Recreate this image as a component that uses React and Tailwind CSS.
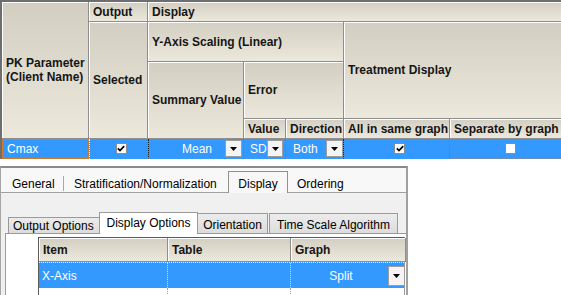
import React from 'react';

const font = "font-['Liberation_Sans',Arial,sans-serif]";
const head =
  'bg-gradient-to-b from-[#d2cec2] to-[#ece9dc] border-r border-b border-r-[#8e8e8e] border-b-[#8e8e8e] shadow-[inset_1px_1px_0_#ffffff] flex items-center pl-[4px] font-bold text-[12px] leading-[14px] text-[#151515]';
const blue = 'bg-[#3399ff] text-white text-[12px] border-b border-dotted border-b-[#6f8fb8]';

function Check({ checked }) {
  return (
    <span className="w-[11px] h-[11px] bg-white border border-[#8c8c8c] flex items-center justify-center">
      {checked && (
        <svg width="8" height="7" viewBox="0 0 8 7">
          <path d="M0.8 3.4 L3 5.6 L7.2 1.2" stroke="#000" strokeWidth="1.7" fill="none" />
        </svg>
      )}
    </span>
  );
}

function DropButton({ h = 'h-[17px]', w = 'w-[17px]' }) {
  return (
    <span className={`${w} ${h} bg-[#f4f4f4] border border-[#9c9c9c] flex items-center justify-center shrink-0`}>
      <svg width="7" height="4" viewBox="0 0 7 4">
        <path d="M0 0h7L3.5 4z" fill="#000" />
      </svg>
    </span>
  );
}

function TopGrid() {
  return (
    <div className="grid grid-cols-[87px_59px_96px_42px_58px_106px_113px] grid-rows-[20px_40px_57px_20px_20px] w-[563px] border-l-2 border-t-2 border-[#6e6e6e]">
      <div className={`${head} col-start-1 row-start-1 row-span-4`}>
        <span>
          PK Parameter
          <br />
          (Client Name)
        </span>
      </div>
      <div className={`${head} col-start-2 row-start-1`}>Output</div>
      <div className={`${head} col-start-2 row-start-2 row-span-3`}>Selected</div>
      <div className={`${head} col-start-3 col-span-5 row-start-1`}>Display</div>
      <div className={`${head} col-start-3 col-span-3 row-start-2`}>Y-Axis Scaling (Linear)</div>
      <div className={`${head} col-start-6 col-span-2 row-start-2 row-span-2`}>Treatment Display</div>
      <div className={`${head} col-start-3 row-start-3 row-span-2`}>Summary Value</div>
      <div className={`${head} col-start-4 col-span-2 row-start-3`}>Error</div>
      <div className={`${head} col-start-4 row-start-4`}>Value</div>
      <div className={`${head} col-start-5 row-start-4`}>Direction</div>
      <div className={`${head} col-start-6 row-start-4 whitespace-nowrap`}>All in same graph</div>
      <div className={`${head} col-start-7 row-start-4 whitespace-nowrap`}>Separate by graph</div>

      {/* data row */}
      <div className="col-start-1 row-start-5 bg-[#3399ff] text-white text-[12px] border border-[#d07a2c] flex items-center pl-[4px]">
        Cmax
      </div>
      <div className={`${blue} col-start-2 row-start-5 flex items-center justify-center pl-[4px] border-l border-l-white`}>
        <Check checked />
      </div>
      <div className={`${blue} col-start-3 row-start-5 flex items-center justify-end pr-px border-l border-l-[#1d1d1d] border-r border-dotted border-r-[#5d7da8]`}>
        <span>Mean</span>
        <span className="ml-[13px]">
          <DropButton />
        </span>
      </div>
      <div className={`${blue} col-start-4 row-start-5 flex items-center justify-between pl-[6px] pr-[2px] border-r border-dotted border-r-[#5d7da8]`}>
        <span>SD</span>
        <DropButton w="w-[16px]" />
      </div>
      <div className={`${blue} col-start-5 row-start-5 flex items-center justify-between pl-[7px] border-r border-r-[#1d1d1d]`}>
        <span>Both</span>
        <DropButton />
      </div>
      <div className={`${blue} col-start-6 row-start-5 flex items-center pl-[50px] border-r border-dotted border-r-[#5d7da8]`}>
        <Check checked />
      </div>
      <div className={`${blue} col-start-7 row-start-5 flex items-center pl-[55px]`}>
        <Check />
      </div>
    </div>
  );
}

function BottomPanel() {
  return (
    <div className="mt-[7px] w-[408px] h-[129px] border-t-2 border-l border-r-2 border-t-[#8a8a8a] border-l-[#a6a6a6] border-r-[#a0a0a0] bg-[#f0f0f0] flex flex-col text-[12px] text-black">
      {/* main tabs */}
      <div className="h-[25px] bg-[#f8f8f8] border-b border-[#a0a0a0] flex items-end shrink-0">
        <div className="w-[62px] pl-[11px] pb-px leading-[14px]">General</div>
        <div className="w-px h-[15px] bg-[#a8a8a8] mb-[1px] self-end" />
        <div className="w-[164px] pl-[10px] pb-px leading-[14px]">Stratification/Normalization</div>
        <div className="w-[60px] h-[22px] -mb-px bg-[#f8f8f8] border-t border-l border-r border-[#909090] flex items-end justify-center pb-[2px] leading-[14px]">
          Display
        </div>
        <div className="pl-[9px] pb-px leading-[14px]">Ordering</div>
      </div>

      {/* sub tabs */}
      <div className="pt-[19px] pl-[4px] flex flex-col flex-1 min-h-0">
        <div className="flex items-end h-[21px] shrink-0">
          <div className="w-[3px]" />
          <div className="w-[91px] h-[16px] bg-gradient-to-b from-[#ececec] to-[#dcdcdc] border-t border-l border-[#9a9a9a] flex items-center pl-[4px] leading-[14px]">
            Output Options
          </div>
          <div className="w-[99px] h-[22px] -mb-px relative bg-white border-t border-l border-r border-[#9a9a9a] flex items-center justify-center pb-[2px] leading-[14px]">
            Display Options
          </div>
          <div className="w-[70px] h-[20px] bg-gradient-to-b from-[#ececec] to-[#dcdcdc] border-t border-r border-[#9a9a9a] flex items-center justify-center pt-[2px] leading-[14px]">
            Orientation
          </div>
          <div className="w-[129px] h-[20px] ml-px bg-gradient-to-b from-[#ececec] to-[#dcdcdc] border-t border-l border-r border-[#9a9a9a] flex items-center justify-center pt-[2px] leading-[14px]">
            Time Scale Algorithm
          </div>
        </div>
        <div className="flex-1 bg-white border-t border-l border-[#9a9a9a] pl-[32px] pt-[3px]">
          <div className="w-[367px] border-l border-t border-l-[#5a5a5a] border-t-[#5a5a5a] border-r border-r-[#9a9a9a]">
            <div className="grid grid-cols-[129px_123px_115px] h-[24px]">
              <div className={`${head} pl-[4px]`}>Item</div>
              <div className={`${head} pl-[4px]`}>Table</div>
              <div className={`${head} pl-[4px]`}>Graph</div>
            </div>
            <div className="grid grid-cols-[129px_123px_115px] h-[26px] bg-[#3399ff] border-t border-dotted border-t-[#e8f2ff] text-white">
              <div className="flex items-center pl-[3px] border-r border-dotted border-r-[#c6ddf6]">X-Axis</div>
              <div className="border-r border-dotted border-r-[#c6ddf6]" />
              <div className="flex items-center">
                <span className="flex-1 text-center pl-[3px]">Split</span>
                <span className="mr-[1px]">
                  <DropButton w="w-[17px]" h="h-[20px]" />
                </span>
              </div>
            </div>
            <div className="grid grid-cols-[129px_123px_115px] h-[12px]">
              <div className="border-r border-dotted border-r-[#9a9a9a]" />
              <div className="border-r border-dotted border-r-[#9a9a9a]" />
              <div />
            </div>
          </div>
        </div>
      </div>
    </div>
  );
}

export default function App() {
  return (
    <div className={`w-[561px] h-[295px] overflow-hidden bg-white ${font}`}>
      <TopGrid />
      <BottomPanel />
    </div>
  );
}
